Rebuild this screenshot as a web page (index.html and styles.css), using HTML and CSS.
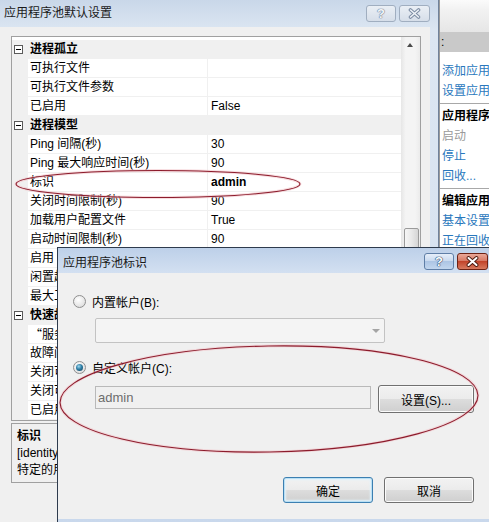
FILE: index.html
```html
<!DOCTYPE html>
<html lang="zh-CN">
<head>
  <meta charset="UTF-8">
  <title>应用程序池标识</title>
  <link rel="stylesheet" href="styles.css">
</head>
<body>
  <div class="desk">

    <!-- painel de ações do IIS, atrás das janelas -->
    <div class="iis-actions">
      <div class="ia-head"></div>
      <div class="ia-band">:</div>
      <ul class="ia-list">
        <li class="link">添加应用程序池...</li>
        <li class="link">设置应用程序池默认设置...</li>
        <li class="sep"></li>
        <li class="group">应用程序池任务</li>
        <li class="off">启动</li>
        <li class="link">停止</li>
        <li class="link">回收...</li>
        <li class="sep"></li>
        <li class="group">编辑应用程序池</li>
        <li class="link">基本设置...</li>
        <li class="link">正在回收...</li>
      </ul>
    </div>

    <!-- janela de trás -->
    <div class="win win-back">
      <div class="title">
        <span class="title-text">应用程序池默认设置</span>
        <span class="tbtn help">?</span>
        <span class="tbtn close">
          <svg width="13" height="11" viewBox="0 0 13 11"><path class="x-out" d="M2.5 2 L10.5 9 M10.5 2 L2.5 9"/><path class="x-in" d="M2.5 2 L10.5 9 M10.5 2 L2.5 9"/></svg>
        </span>
      </div>
      <div class="win-body">
        <div class="pgrid">
          <div class="pg-rows">
            <div class="pg-row cat"><span class="pg-toggle"></span>进程孤立</div>
            <div class="pg-row"><span class="pg-gut"></span><span class="pg-name">可执行文件</span><span class="pg-val"></span></div>
            <div class="pg-row"><span class="pg-gut"></span><span class="pg-name">可执行文件参数</span><span class="pg-val"></span></div>
            <div class="pg-row"><span class="pg-gut"></span><span class="pg-name">已启用</span><span class="pg-val">False</span></div>
            <div class="pg-row cat"><span class="pg-toggle"></span>进程模型</div>
            <div class="pg-row"><span class="pg-gut"></span><span class="pg-name">Ping 间隔(秒)</span><span class="pg-val">30</span></div>
            <div class="pg-row"><span class="pg-gut"></span><span class="pg-name">Ping 最大响应时间(秒)</span><span class="pg-val">90</span></div>
            <div class="pg-row"><span class="pg-gut"></span><span class="pg-name">标识</span><span class="pg-val changed">admin</span></div>
            <div class="pg-row"><span class="pg-gut"></span><span class="pg-name">关闭时间限制(秒)</span><span class="pg-val">90</span></div>
            <div class="pg-row"><span class="pg-gut"></span><span class="pg-name">加载用户配置文件</span><span class="pg-val">True</span></div>
            <div class="pg-row"><span class="pg-gut"></span><span class="pg-name">启动时间限制(秒)</span><span class="pg-val">90</span></div>
            <div class="pg-row"><span class="pg-gut"></span><span class="pg-name">启用 Ping</span><span class="pg-val">True</span></div>
            <div class="pg-row"><span class="pg-gut"></span><span class="pg-name">闲置超时(分钟)</span><span class="pg-val">20</span></div>
            <div class="pg-row"><span class="pg-gut"></span><span class="pg-name">最大工作进程数</span><span class="pg-val">1</span></div>
            <div class="pg-row cat"><span class="pg-toggle"></span>快速故障防护</div>
            <div class="pg-row"><span class="pg-gut"></span><span class="pg-name cjk">“服务不可用”响应类型</span><span class="pg-val">HttpLevel</span></div>
            <div class="pg-row"><span class="pg-gut"></span><span class="pg-name">故障间隔(分钟)</span><span class="pg-val">5</span></div>
            <div class="pg-row"><span class="pg-gut"></span><span class="pg-name">关闭可执行文件</span><span class="pg-val"></span></div>
            <div class="pg-row"><span class="pg-gut"></span><span class="pg-name">关闭可执行文件参数</span><span class="pg-val"></span></div>
            <div class="pg-row"><span class="pg-gut"></span><span class="pg-name">已启用</span><span class="pg-val">True</span></div>
          </div>
          <div class="pg-scroll">
            <div class="sb-up"></div>
            <div class="sb-thumb"></div>
          </div>
        </div>
        <div class="pg-desc">
          <b>标识</b><br>
          [identityType, username, password] 将应用程序池配置为以内置帐户身份运行，或以<br>
          特定的用户身份运行。
        </div>
      </div>
    </div>

    <!-- diálogo da frente -->
    <div class="win win-dlg">
      <div class="title">
        <span class="title-text">应用程序池标识</span>
        <span class="tbtn help">?</span>
        <span class="tbtn close">
          <svg width="13" height="11" viewBox="0 0 13 11"><path class="x-out" d="M2.5 2 L10.5 9 M10.5 2 L2.5 9"/><path class="x-in" d="M2.5 2 L10.5 9 M10.5 2 L2.5 9"/></svg>
        </span>
      </div>
      <div class="dlg-body">
        <label class="opt"><span class="radio"></span>内置帐户(B):</label>
        <div class="combo"><span class="combo-arrow"></span></div>

        <label class="opt"><span class="radio checked"></span>自定义帐户(C):</label>
        <div class="acct">
          <div class="textbox">admin</div>
          <button class="btn btn-set">设置(S)...</button>
        </div>

        <div class="footer">
          <button class="btn default">确定</button>
          <button class="btn">取消</button>
        </div>
      </div>
    </div>

    <!-- marcas vermelhas feitas à mão -->
    <svg class="marks" width="489" height="522" viewBox="0 0 489 522">
      <ellipse class="halo" cx="158" cy="184" rx="142" ry="13.5"/>
      <ellipse class="ink" cx="158" cy="184" rx="142" ry="13.5"/>
      <ellipse class="halo" cx="269" cy="399" rx="209" ry="53" transform="rotate(-1 269 399)"/>
      <ellipse class="ink" cx="269" cy="399" rx="209" ry="53" transform="rotate(-1 269 399)"/>
    </svg>
  </div>
</body>
</html>
```

FILE: styles.css
```css
:root {
  --fundo: #f0f0f0;
  --borda: #a0a0a0;
  --linha: #f0f0f0;
  --link: #2a78bd;
  --tinta: #8c1c2c;
}

body {
  margin: 0;
  font-family: "Liberation Sans", "Noto Sans CJK SC", sans-serif;
  font-size: 12px;
  color: #000;
}

.desk {
  position: relative;
  width: 489px;
  height: 522px;
  overflow: hidden;
  background: var(--fundo);
}

/* painel de ações */
.iis-actions {
  position: absolute;
  left: 439px;
  top: 0;
  width: 200px;
  height: 522px;
  background: #fff;
  border-left: 1px solid #9a9a9a;
}

.ia-head {
  height: 32px;
  background: linear-gradient(#fbfbfb, #f2f2f2 30%, #e6e6e6);
}

.ia-band {
  height: 20px;
  line-height: 20px;
  background: #c9c9c9;
  padding-left: 1px;
}

.ia-list {
  list-style: none;
  margin: 0;
  padding: 9px 0 0 2px;
}

.ia-list li {
  height: 20px;
  line-height: 20px;
  white-space: nowrap;
}

.ia-list .link { color: var(--link); }
.ia-list .off { color: #9a9a9a; }
.ia-list .group { font-weight: bold; }

.ia-list .sep {
  height: 1px;
  margin: 2px 0 2px -2px;
  background: #a8a8a8;
}

/* janelas */
.win {
  position: absolute;
  box-sizing: border-box;
}

.title {
  display: flex;
  align-items: flex-start;
}

.title-text {
  flex: 1;
  color: #1a1a1a;
  white-space: nowrap;
}

.tbtn {
  box-sizing: border-box;
  width: 30px;
  height: 17px;
  margin-top: 5px;
  border: 1px solid #8797ad;
  border-radius: 3px;
  display: flex;
  align-items: center;
  justify-content: center;
  font-weight: bold;
  font-size: 13px;
  line-height: 1;
}

.tbtn + .tbtn { margin-left: 3px; }
.tbtn.close { width: 31px; }

.tbtn svg path {
  fill: none;
  stroke-linecap: round;
}

.win-back {
  left: 0;
  top: 0;
  width: 439px;
  height: 522px;
  background: linear-gradient(#c9d7e9, #dce6f2 30px, #d3dfee);
  border-right: 1px solid #70829b;
}

.win-back .title {
  height: 27px;
  padding: 0 8px 0 4px;
}

.win-back .title-text { line-height: 27px; }

.win-back .tbtn {
  background: linear-gradient(#eaeff5, #d6dee9);
  border-color: #a0aec0;
  color: #f2f5f9;
  text-shadow: 0 0 1px #6f7f96, 0 0 1px #6f7f96, 0 0 1px #6f7f96;
}

.win-back .x-out { stroke: #7c8ca3; stroke-width: 3.6; }
.win-back .x-in { stroke: #eef2f7; stroke-width: 1.6; }

.win-body {
  box-sizing: border-box;
  height: 495px;
  margin-right: 8px;
  padding: 9px 0 0 11px;
  background: var(--fundo);
}

/* grade de propriedades */
.pgrid {
  box-sizing: border-box;
  width: 410px;
  height: 385px;
  border: 1px solid var(--borda);
  background: #fff;
  display: flex;
}

.pg-rows {
  flex: 1;
  padding-top: 3px;
  overflow: hidden;
}

.pg-row {
  box-sizing: border-box;
  height: 19px;
  line-height: 18px;
  display: grid;
  grid-template-columns: 16px 180px 1fr;
  border-bottom: 1px solid var(--linha);
  white-space: nowrap;
}

.pg-gut { background: var(--linha); }

.pg-name {
  padding-left: 2px;
  border-right: 1px solid var(--linha);
  overflow: hidden;
}

.cjk { font-family: "Noto Sans CJK SC", sans-serif; }

.pg-val {
  padding-left: 3px;
  overflow: hidden;
}

.pg-val.changed { font-weight: bold; }

.pg-row.cat {
  display: flex;
  align-items: center;
  background: var(--linha);
  font-weight: bold;
}

.pg-toggle {
  position: relative;
  box-sizing: border-box;
  width: 9px;
  height: 9px;
  margin: 0 7px 0 2px;
  border: 1px solid #5a5a5a;
  background: #fff;
}

.pg-toggle::after {
  content: "";
  position: absolute;
  left: 1px;
  right: 1px;
  top: 3px;
  height: 1px;
  background: #000;
}

.pg-scroll {
  position: relative;
  width: 19px;
  background: linear-gradient(to right, #e6e6e6, #f4f4f4 25%, #f4f4f4 75%, #ebebeb);
}

.sb-up {
  height: 17px;
  position: relative;
}

.sb-up::after {
  content: "";
  position: absolute;
  left: 6px;
  top: 6px;
  border-left: 3px solid transparent;
  border-right: 3px solid transparent;
  border-bottom: 4px solid #4a4a4a;
}

.sb-thumb {
  position: absolute;
  left: 3px;
  right: 1px;
  top: 191px;
  height: 70px;
  box-sizing: border-box;
  border: 1px solid #9a9a9a;
  border-radius: 2px;
  background: linear-gradient(to right, #f6f6f6, #e8e8e8 50%, #d5d5d5);
}

.pg-desc {
  box-sizing: border-box;
  width: 410px;
  height: 60px;
  margin-top: 2px;
  padding: 4px 5px;
  border: 1px solid var(--borda);
  line-height: 17px;
  white-space: nowrap;
  overflow: hidden;
}

/* diálogo */
.win-dlg {
  left: 57px;
  top: 247px;
  width: 440px;
  height: 276px;
  border-left: 1px solid #2e3b4d;
  border-top: 1px solid #2e3b4d;
  background: linear-gradient(#bdd0e9, #d3e0f1 25px, #c9d8ec);
}

.win-dlg .title {
  height: 25px;
  padding: 0 9px 0 5px;
}

.win-dlg .title-text {
  line-height: 25px;
  padding-top: 3px;
}

.win-dlg .tbtn.help {
  background: linear-gradient(#e6eef9, #c7d8ee 50%, #adc5e4 50%, #c2d6ee);
  border-color: #5f7ea6;
  color: #fff;
  text-shadow: 0 0 1px #1d3a63, 0 0 1px #1d3a63, 0 0 1px #1d3a63;
}

.win-dlg .tbtn.close {
  background: linear-gradient(#eaa898, #d57560 50%, #c2442b 50%, #d77a5f);
  border-color: #6e2214;
}

.win-dlg .x-out { stroke: #4b1a10; stroke-width: 3.8; }
.win-dlg .x-in { stroke: #fff; stroke-width: 2; }

.dlg-body {
  box-sizing: border-box;
  height: 246px;
  padding: 20px 15px 0;
  background: var(--fundo);
}

.opt {
  display: flex;
  align-items: center;
  gap: 6px;
  height: 16px;
}

.combo + .opt { margin-top: 16px; }

.radio {
  position: relative;
  box-sizing: border-box;
  width: 13px;
  height: 13px;
  border-radius: 50%;
  border: 1px solid #8f8f8f;
  background: radial-gradient(circle at 40% 35%, #fff, #e2e2e2 70%, #cfcfcf);
}

.radio.checked::after {
  content: "";
  position: absolute;
  left: 2px;
  top: 2px;
  width: 7px;
  height: 7px;
  border-radius: 50%;
  background: radial-gradient(circle at 40% 35%, #9fd8ef, #2f7fa6 45%, #0f3a52);
}

.combo {
  position: relative;
  box-sizing: border-box;
  width: 290px;
  height: 25px;
  margin: 9px 0 0 22px;
  border: 1px solid #c3c3c3;
  border-radius: 2px;
  background: #f4f4f4;
}

.combo-arrow {
  position: absolute;
  right: 4px;
  top: 10px;
  border-left: 4px solid transparent;
  border-right: 4px solid transparent;
  border-top: 4px solid #a5a5a5;
}

.acct {
  display: flex;
  align-items: flex-start;
  gap: 7px;
  margin: 10px 0 0 22px;
}

.textbox {
  box-sizing: border-box;
  width: 276px;
  height: 23px;
  margin-top: 1px;
  padding-left: 2px;
  line-height: 21px;
  font-size: 13px;
  color: #6d6d6d;
  border: 1px solid #b9b9b9;
  background: var(--fundo);
}

.btn {
  box-sizing: border-box;
  width: 90px;
  height: 26px;
  padding: 0;
  font: inherit;
  color: #000;
  border: 1px solid #707070;
  border-radius: 3px;
  background: linear-gradient(#f2f2f2, #ebebeb 50%, #dddddd 50%, #cfcfcf);
  box-shadow: inset 0 0 0 1px #fbfbfb;
}

.btn-set {
  width: 96px;
  height: 28px;
}

.btn.default {
  border-color: #3c7fb1;
  box-shadow: inset 0 0 0 1px #b9e0f5, inset 0 0 2px 2px #e1f2fb;
}

.footer {
  display: flex;
  gap: 11px;
  margin: 64px 0 0 210px;
}

/* marcas */
.marks {
  position: absolute;
  left: 0;
  top: 0;
  pointer-events: none;
}

.marks ellipse { fill: none; }
.marks .halo { stroke: #f1c4ca; stroke-width: 3; opacity: 0.6; }
.marks .ink { stroke: var(--tinta); stroke-width: 1.1; }
```
